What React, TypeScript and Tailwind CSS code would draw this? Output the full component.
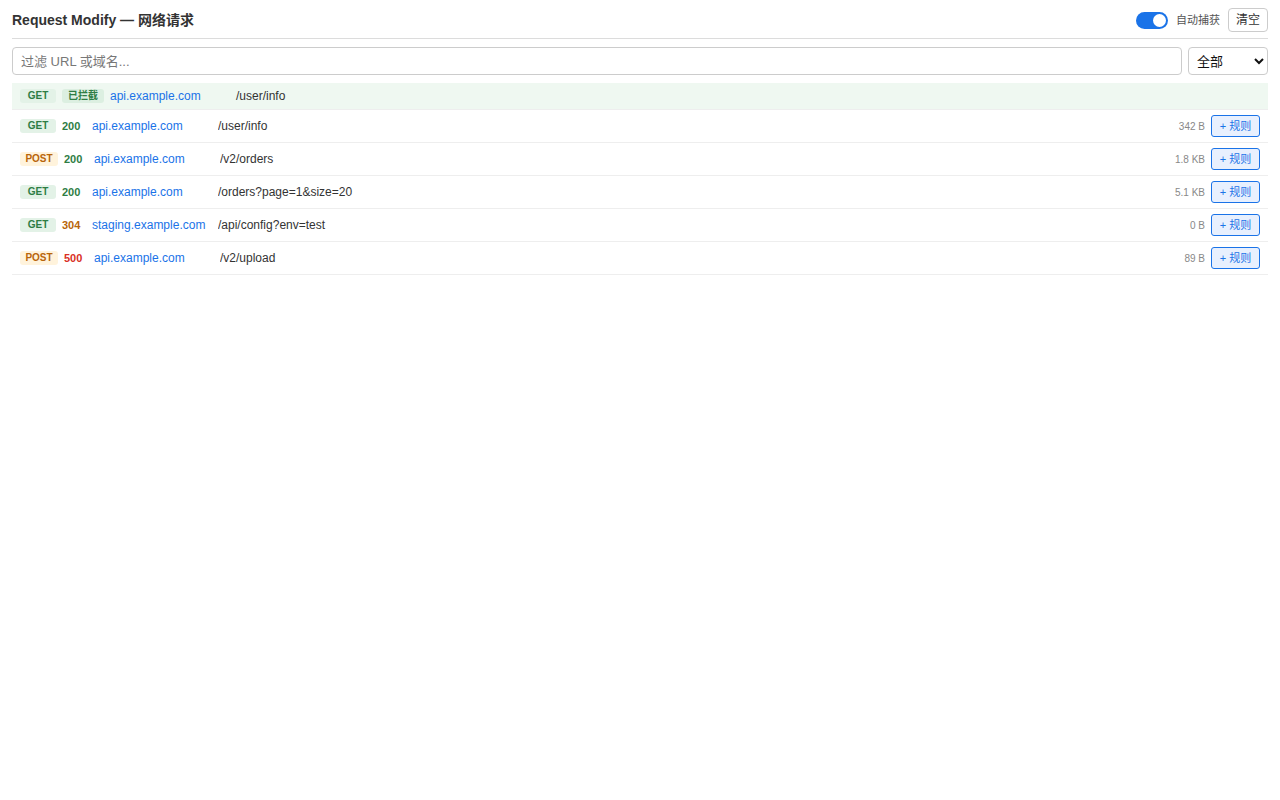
import React, { useState } from "react";

type Req = {
  method: "GET" | "POST";
  status: number;
  host: string;
  path: string;
  size: string;
};

const requests: Req[] = [
  { method: "GET", status: 200, host: "api.example.com", path: "/user/info", size: "342 B" },
  { method: "POST", status: 200, host: "api.example.com", path: "/v2/orders", size: "1.8 KB" },
  { method: "GET", status: 200, host: "api.example.com", path: "/orders?page=1&size=20", size: "5.1 KB" },
  { method: "GET", status: 304, host: "staging.example.com", path: "/api/config?env=test", size: "0 B" },
  { method: "POST", status: 500, host: "api.example.com", path: "/v2/upload", size: "89 B" },
];

function MethodBadge({ m }: { m: "GET" | "POST" }) {
  return (
    <span
      className={`inline-flex h-[14px] items-center justify-center rounded-[3px] px-[6px] text-[10px] font-bold leading-none ${
        m === "GET" ? "w-[36px] bg-[#e3f2e7] text-[#2e7d44]" : "w-[38px] bg-[#fff3dc] text-[#b8650a]"
      }`}
    >
      {m}
    </span>
  );
}

function statusColor(s: number) {
  if (s >= 500) return "text-[#d93025]";
  if (s >= 300) return "text-[#b8650a]";
  return "text-[#2e7d44]";
}

export default function App() {
  const [auto, setAuto] = useState(true);
  const [filter, setFilter] = useState("");

  return (
    <div
      className="min-h-screen bg-white px-3 pt-2 text-[12px] text-[#333]"
      style={{ fontFamily: '"Liberation Sans", Arial, "Noto Sans CJK SC", sans-serif' }}
    >
      {/* Header */}
      <div className="flex items-center justify-between border-b border-[#dcdcdc] pb-[6px]">
        <h1 className="text-[14px] font-bold text-[#333]">Request Modify — 网络请求</h1>
        <div className="flex items-center gap-2">
          <button
            onClick={() => setAuto(!auto)}
            className={`relative h-[17px] w-[32px] rounded-full ${auto ? "bg-[#1a73e8]" : "bg-[#ccc]"}`}
          >
            <span
              className={`absolute top-[2px] h-[13px] w-[13px] rounded-full bg-white ${
                auto ? "left-[17px]" : "left-[2px]"
              }`}
            />
          </button>
          <span className="text-[11px] text-[#555]">自动捕获</span>
          <button className="h-[24px] w-[40px] rounded-[4px] border border-[#ccc] bg-white text-[12px] text-[#333]">
            清空
          </button>
        </div>
      </div>

      {/* Filter */}
      <div className="mt-2 flex gap-[6px]">
        <input
          type="text"
          value={filter}
          onChange={(e) => setFilter(e.target.value)}
          placeholder="过滤 URL 或域名..."
          className="h-[28px] flex-1 rounded-[4px] border border-[#ccc] px-2 text-[13px] text-[#333] placeholder-[#777] focus:outline-none"
        />
        <select className="h-[28px] w-[80px] rounded-[4px] border border-[#ccc] bg-white px-1 text-[13px] text-[#111]">
          <option>全部</option>
        </select>
      </div>

      {/* List */}
      <div className="mt-2">
        {/* intercepted */}
        <div className="flex items-center gap-[6px] border-b border-[#eee] bg-[#eff8f1] px-2 py-[4px]">
          <MethodBadge m="GET" />
          <span className="inline-flex h-[14px] items-center rounded-[3px] bg-[#dcefe1] px-[6px] text-[10px] font-bold leading-none text-[#2e7d44]">
            已拦截
          </span>
          <span className="w-[120px] shrink-0 truncate text-[#1a73e8]">api.example.com</span>
          <span className="text-[#333]">/user/info</span>
        </div>

        {requests.map((r, i) => (
          <div key={i} className="flex items-center gap-[6px] border-b border-[#eee] px-2 py-[5px]">
            <MethodBadge m={r.method} />
            <span className={`w-[24px] shrink-0 text-[11px] font-bold ${statusColor(r.status)}`}>{r.status}</span>
            <span className="w-[120px] shrink-0 whitespace-nowrap text-[#1a73e8]">{r.host}</span>
            <span className="flex-1 truncate text-[#333]">{r.path}</span>
            <span className="text-[10px] text-[#888]">{r.size}</span>
            <button className="h-[22px] w-[49px] rounded-[3px] border border-[#1a73e8] bg-[#e8f0fe] text-[11px] text-[#1a73e8]">
              + 规则
            </button>
          </div>
        ))}
      </div>
    </div>
  );
}
